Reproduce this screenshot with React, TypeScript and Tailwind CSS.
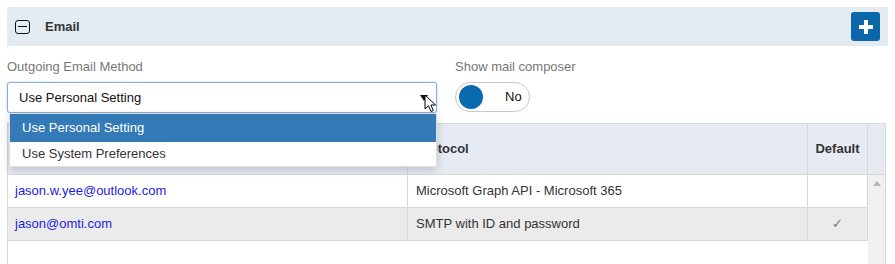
import React from 'react';

const rows = [
  { email: 'jason.w.yee@outlook.com', protocol: 'Microsoft Graph API - Microsoft 365', isDefault: false },
  { email: 'jason@omti.com', protocol: 'SMTP with ID and password', isDefault: true },
];

function CursorArrow() {
  return (
    <svg width="14" height="20" viewBox="0 0 14 20" className="absolute left-[424px] top-[94px]">
      <path d="M1 1 L1 15 L4.5 11.8 L7 17.5 L9.3 16.5 L6.9 11 L11.5 11 Z" fill="#fff" stroke="#000" strokeWidth="1" strokeLinejoin="round" />
    </svg>
  );
}

export default function App() {
  return (
    <div className="relative h-[264px] w-[895px] overflow-hidden bg-white px-[7px] pt-[7px] font-['Liberation_Sans',Arial,sans-serif] text-[13px] text-[#333]">
      {/* Section header */}
      <div className="flex h-[39px] items-center justify-between bg-[#e4ebf2] pl-2 pr-2">
        <div className="flex items-center">
          <span className="flex h-[14px] w-[15px] items-center justify-center rounded-[3px] border-[1.5px] border-[#111]">
            <span className="h-[1.5px] w-[9px] bg-[#111]" />
          </span>
          <span className="ml-[15px] font-bold text-[#333]">Email</span>
        </div>
        <button className="flex h-[29px] w-[29px] items-center justify-center rounded-[3px] bg-[#0a67aa]">
          <svg width="16" height="16" viewBox="0 0 16 16">
            <rect x="6" y="1" width="4" height="14" fill="#fff" />
            <rect x="1" y="6" width="14" height="4" fill="#fff" />
          </svg>
        </button>
      </div>

      {/* Settings row */}
      <div className="mt-[12px] flex">
        <div className="w-[430px]">
          <div className="leading-[18px] text-[#777]">Outgoing Email Method</div>
          <div className="mt-[6px] flex h-[31px] items-center justify-between rounded-[3px] border border-[#86aee0] bg-white pl-[11px] pr-[7px] shadow-[0_0_2px_rgba(102,153,220,0.6)]">
            <span className="text-[#111]">Use Personal Setting</span>
            <svg width="8" height="6" viewBox="0 0 8 6" className="mr-[1px]">
              <path d="M0 0 L8 0 L4 6 Z" fill="#111" />
            </svg>
          </div>
        </div>
        <div className="ml-[18px]">
          <div className="leading-[18px] text-[#777]">Show mail composer</div>
          <div className="mt-[6px] flex h-[30px] w-[75px] items-center rounded-full border border-[#c8c8c8] bg-white px-[3px]">
            <span className="h-[24px] w-[24px] rounded-full bg-[#0b69ad]" />
            <span className="ml-[22px] text-[#111]">No</span>
          </div>
        </div>
      </div>

      {/* Table */}
      <div className="mt-[10px] w-[879px] border-l border-r border-t border-[#d8d8d8]">
        <div className="flex h-[51px] border-b border-[#d8d8d8] bg-[#e6ebf3] font-bold">
          <div className="flex w-[400px] items-center border-r border-[#d8d8d8] pl-[8px]" />
          <div className="flex w-[400px] items-center border-r border-[#d8d8d8] pl-[8px]">Protocol</div>
          <div className="flex w-[60px] items-center justify-center border-r border-[#d8d8d8]">Default</div>
          <div className="flex-1" />
        </div>
        <div className="flex h-[100px]">
          <div className="w-[860px]">
            {rows.map((r, i) => (
              <div key={i} className={`flex h-[33px] border-b border-[#d8d8d8] ${i % 2 ? 'bg-[#ebebeb]' : 'bg-white'}`}>
                <div className="flex w-[400px] items-center border-r border-[#d8d8d8] pl-[7px] text-[#1c1ce0]">{r.email}</div>
                <div className="flex w-[400px] items-center border-r border-[#d8d8d8] pl-[8px] text-[#333]">{r.protocol}</div>
                <div className="flex w-[60px] items-center justify-center border-r border-[#d8d8d8] text-[#777]">
                  {r.isDefault ? '✓' : ''}
                </div>
              </div>
            ))}
          </div>
          <div className="flex flex-1 justify-center bg-[#f1f1f1] pt-[6px]">
            <svg width="8" height="5" viewBox="0 0 8 5">
              <path d="M0 5 L4 0 L8 5 Z" fill="#b5b5b5" />
            </svg>
          </div>
        </div>
      </div>

      {/* Open dropdown list */}
      <div className="absolute left-[9px] top-[113px] w-[428px] border border-[#e0e0e0] bg-white text-[#333] shadow-[0_3px_8px_rgba(0,0,0,0.18)]">
        <div className="flex h-[28px] items-center bg-[#337ab7] pl-[12px] text-white">Use Personal Setting</div>
        <div className="flex h-[24px] items-center pl-[12px]">Use System Preferences</div>
      </div>

      <CursorArrow />
    </div>
  );
}
